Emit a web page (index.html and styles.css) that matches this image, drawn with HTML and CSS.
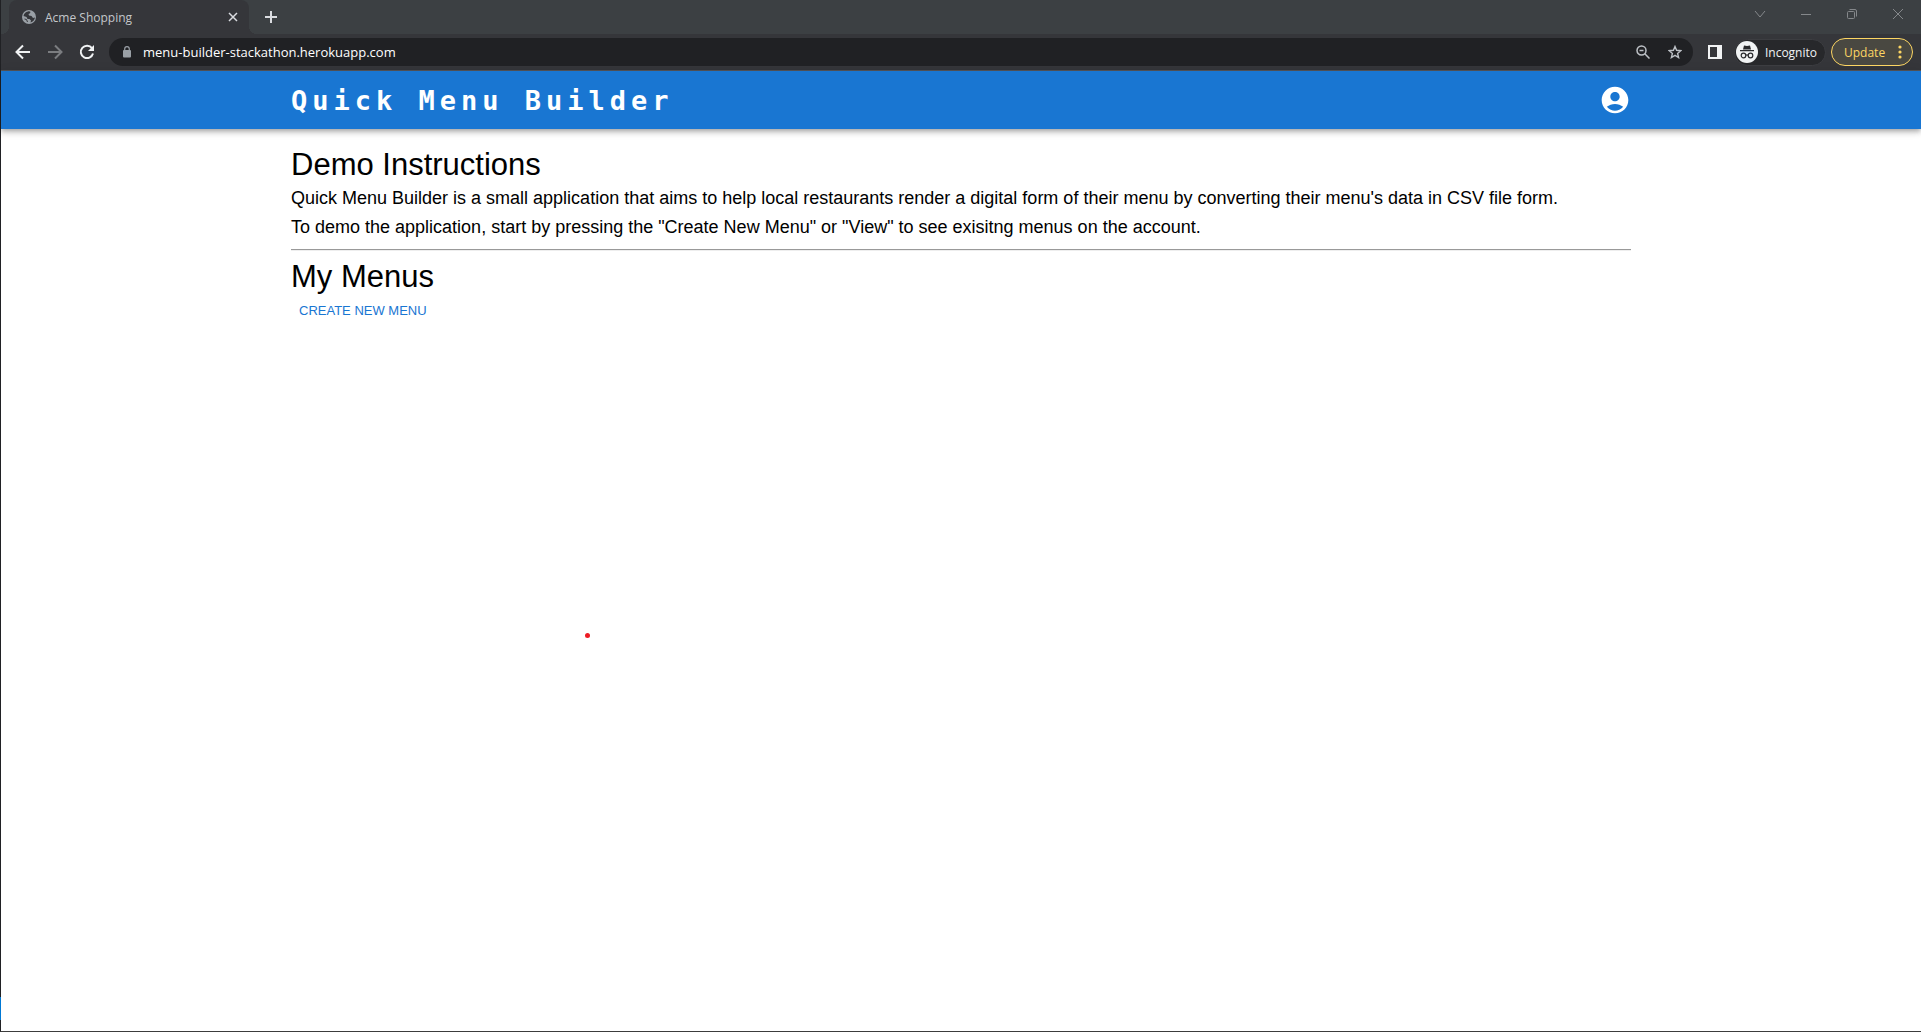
FILE: index.html
```html
<!DOCTYPE html>
<html lang="en">
<head>
<meta charset="utf-8">
<title>Acme Shopping</title>
<link rel="stylesheet" href="styles.css">
</head>
<body>
<div class="window">
  <div class="tabstrip">
    <div class="tab">
      <svg class="favicon" width="14" height="14" viewBox="0 0 14 14"><circle cx="7" cy="7" r="7" fill="#9aa0a6"/><path d="M6 1.500C8 1 9 2 8 3.200L6.500 4 7 5.500l2.500.5L11 8l2-.5C12.500 10 11 12 8.500 12.500L9 10.500 7.500 9H5.500L4.500 7 1.500 6C2 3.500 3.500 2 6 1.500z" fill="#35363a"/><path d="M2.500 9l2 .5 1 2.500" stroke="#35363a" fill="none"/></svg>
      <span class="tab-title">Acme Shopping</span>
      <button class="icon" aria-label="Close tab"><svg width="10" height="10" viewBox="0 0 10 10"><path d="M1 1l8 8M9 1l-8 8" stroke="#dadce0" stroke-width="1.500"/></svg></button>
    </div>
    <button class="icon new-tab" aria-label="New tab"><svg width="12" height="12" viewBox="0 0 12 12"><path d="M6 0v12M0 6h12" stroke="#dadce0" stroke-width="2"/></svg></button>
    <div class="window-controls">
      <button class="icon" aria-label="Search tabs"><svg width="12" height="12" viewBox="0 0 12 12"><path d="M1 3l5 6 5-6" fill="none" stroke="#85888b"/></svg></button>
      <button class="icon" aria-label="Minimize"><svg width="12" height="12" viewBox="0 0 12 12"><path d="M1 6.500h10" stroke="#85888b"/></svg></button>
      <button class="icon" aria-label="Restore"><svg width="12" height="12" viewBox="0 0 12 12" fill="none" stroke="#85888b"><rect x="1.500" y="3.500" width="7" height="7" rx="1"/><path d="M3.500 1.500H9a1.500 1.500 0 0 1 1.500 1.500v5.500"/></svg></button>
      <button class="icon" aria-label="Close"><svg width="12" height="12" viewBox="0 0 12 12"><path d="M1 1l10 10M11 1L1 11" stroke="#85888b"/></svg></button>
    </div>
  </div>
  <div class="toolbar">
    <div class="nav">
      <button class="icon" aria-label="Back"><svg width="16" height="16" viewBox="0 0 16 16" fill="none" stroke="#f1f3f4" stroke-width="2"><path d="M15 8H2.500M8 1.500L1.500 8 8 14.500"/></svg></button>
      <button class="icon" aria-label="Forward" disabled><svg width="16" height="16" viewBox="0 0 16 16" fill="none" stroke="#7b7d80" stroke-width="2"><path d="M1 8h12.500M8 1.500L14.500 8 8 14.500"/></svg></button>
      <button class="icon" aria-label="Reload"><svg width="16" height="16" viewBox="0 0 16 16"><path d="M13 4.200A6.200 6.200 0 1 0 14 9.500" fill="none" stroke="#f1f3f4" stroke-width="2"/><path d="M15 1v6H9z" fill="#f1f3f4"/></svg></button>
    </div>
    <div class="address">
      <svg width="8" height="12" viewBox="0 0 8 12"><rect y="4" width="8" height="7.500" rx="1" fill="#9aa0a6"/><path d="M1.700 4.500V3a2.300 2.300 0 0 1 4.600 0v1.500" fill="none" stroke="#9aa0a6" stroke-width="1.200"/></svg>
      <input class="url" type="text" aria-label="Address" value="menu-builder-stackathon.herokuapp.com">
      <div class="address-actions">
        <button class="icon" aria-label="Zoom"><svg width="14" height="14" viewBox="0 0 14 14" fill="none" stroke="#bdc1c6" stroke-width="1.500"><circle cx="5.500" cy="5.500" r="4.500"/><path d="M8.800 8.800l4.700 4.700M3.500 5.500h4"/></svg></button>
        <button class="icon" aria-label="Bookmark"><svg width="14" height="14" viewBox="0 0 14 14"><path d="M7 1.500l1.600 3.800 4.200.4-3.200 2.700 1 4.100L7 10.300l-3.600 2.200 1-4.100L1.200 5.700l4.200-.4z" fill="none" stroke="#bdc1c6" stroke-width="1.400"/></svg></button>
      </div>
    </div>
    <button class="icon side-panel" aria-label="Side panel"><svg width="14" height="14" viewBox="0 0 14 14"><path fill-rule="evenodd" d="M0 0h14v14H0zM2 2v10h7V2z" fill="#f1f3f4"/></svg></button>
    <button class="incognito"><svg width="22" height="22" viewBox="0 0 22 22"><circle cx="11" cy="11" r="11" fill="#f1f3f4"/><path d="M8 4.500l3 .5 3-.5 1 4H7zM4 9h14v1.200H4z" fill="#292a2d"/><g fill="none" stroke="#292a2d" stroke-width="1.200"><circle cx="7.500" cy="14.500" r="2.300"/><circle cx="14.500" cy="14.500" r="2.300"/><path d="M9.800 14.200q1.200-.8 2.400 0"/></g></svg>Incognito</button>
    <button class="update">Update<svg width="4" height="14" viewBox="0 0 4 14" fill="#fdd663"><circle cx="2" cy="2" r="1.600"/><circle cx="2" cy="7" r="1.600"/><circle cx="2" cy="12" r="1.600"/></svg></button>
  </div>
  <header class="appbar">
    <div class="container appbar-row">
      <a class="brand" href="#">Quick Menu Builder</a>
      <button class="icon account" aria-label="Account"><svg width="32" height="32" viewBox="0 0 24 24"><path fill="#fff" d="M12 2C6.480 2 2 6.480 2 12s4.480 10 10 10 10-4.480 10-10S17.520 2 12 2zm0 4c1.930 0 3.500 1.570 3.500 3.500S13.930 13 12 13s-3.500-1.570-3.500-3.500S10.070 6 12 6zm0 14c-2.030 0-4.430-.82-6.140-2.880C7.550 15.800 9.680 15 12 15s4.450.8 6.140 2.120C16.430 19.180 14.030 20 12 20z"/></svg></button>
    </div>
  </header>
  <main class="container content">
    <h1>Demo Instructions</h1>
    <p>Quick Menu Builder is a small application that aims to help local restaurants render a digital form of their menu by converting their menu's data in CSV file form.</p>
    <p>To demo the application, start by pressing the "Create New Menu" or "View" to see exisitng menus on the account.</p>
    <hr>
    <h1>My Menus</h1>
    <button class="create">CREATE NEW MENU</button>
  </main>
</div>
<div class="pointer"></div>
<div class="edge-mark"></div>
</body>
</html>
```
FILE: styles.css
```css
* { box-sizing: border-box; }
body {
  margin: 0;
  background: #fff;
  color: #000;
  font-family: "Liberation Sans", Arial, sans-serif;
}
button { padding: 0; border: 0; background: none; font: inherit; }
svg { display: block; flex: none; }
.icon { display: flex; align-items: center; justify-content: center; }
.window {
  min-height: 100vh;
  border-left: 1px solid #202124;
  border-bottom: 1px solid #3c3c3c;
}
.tabstrip, .toolbar { font-family: "Open Sans", "Noto Sans", sans-serif; font-size: 12px; }
.tabstrip { display: flex; height: 34px; padding-left: 8px; background: #3c4043; }
.tab {
  position: relative;
  display: flex;
  align-items: center;
  gap: 9px;
  width: 240px;
  padding: 0 11px 0 13px;
  border-radius: 8px 8px 0 0;
  background: #35363a;
  color: #c4c7ca;
}
.tab::before, .tab::after {
  content: "";
  position: absolute;
  bottom: 0;
  width: 8px;
  height: 8px;
}
.tab::before { right: 100%; background: radial-gradient(circle at 0 0, transparent 8px, #35363a 8px); }
.tab::after { left: 100%; background: radial-gradient(circle at 100% 0, transparent 8px, #35363a 8px); }
.tab-title { flex: 1; white-space: nowrap; }
.new-tab { width: 44px; }
.window-controls { display: flex; margin-left: auto; height: 28px; }
.window-controls .icon { width: 46px; }
.toolbar {
  display: flex;
  align-items: center;
  height: 37px;
  padding-right: 8px;
  border-bottom: 1px solid #55565a;
  background: #35363a;
}
.nav { display: flex; gap: 16px; padding: 0 14px; }
.address {
  display: flex;
  flex: 1;
  align-items: center;
  gap: 12px;
  height: 28px;
  padding: 0 10px 0 14px;
  border-radius: 14px;
  background: #202124;
}
.address-actions { display: flex; gap: 16px; }
.address .icon { width: 16px; }
.url {
  flex: 1;
  min-width: 0;
  padding: 0;
  border: 0;
  outline: 0;
  background: none;
  color: #fff;
  font: inherit;
  font-size: 13px;
}
.side-panel { margin: 0 12px 0 15px; }
.incognito {
  display: flex;
  align-items: center;
  gap: 7px;
  height: 27px;
  margin-right: 5px;
  padding: 0 8px 0 1px;
  border: 1px solid #3c3d41;
  border-radius: 14px;
  background: #27282b;
  color: #f1f3f4;
}
.update {
  display: flex;
  align-items: center;
  justify-content: space-between;
  width: 82px;
  height: 28px;
  padding: 0 10px 0 12px;
  border: 1px solid #fdd663;
  border-radius: 14px;
  background: #494841;
  color: #fdd663;
}
.appbar {
  height: 58px;
  background: #1976d2;
  box-shadow: 0 2px 4px -1px rgba(0,0,0,.2), 0 4px 5px rgba(0,0,0,.14), 0 1px 10px rgba(0,0,0,.12);
}
.container { max-width: 1340px; margin: 0 auto; }
.appbar-row { display: flex; align-items: center; justify-content: space-between; height: 100%; }
.brand {
  color: #fff;
  font: bold 27px "DejaVu Sans Mono", monospace;
  letter-spacing: 5px;
  text-decoration: none;
}
.content { padding-top: 17px; }
h1 { margin: 0; font-size: 31px; font-weight: 400; line-height: 38px; }
p { margin: 0; font-size: 18px; line-height: 29px; }
hr { margin: 7px 0; border: 0; border-top: 1px solid #999; border-bottom: 1px solid #eee; }
.create { padding: 4px 8px; color: #1976d2; font-size: 13px; line-height: 22px; }
.pointer {
  position: absolute;
  left: 585px;
  top: 633px;
  width: 5px;
  height: 5px;
  border-radius: 50%;
  background: #ed1c24;
}
.edge-mark { position: absolute; left: 0; top: 997px; width: 1px; height: 23px; background: #0078d4; }
```
